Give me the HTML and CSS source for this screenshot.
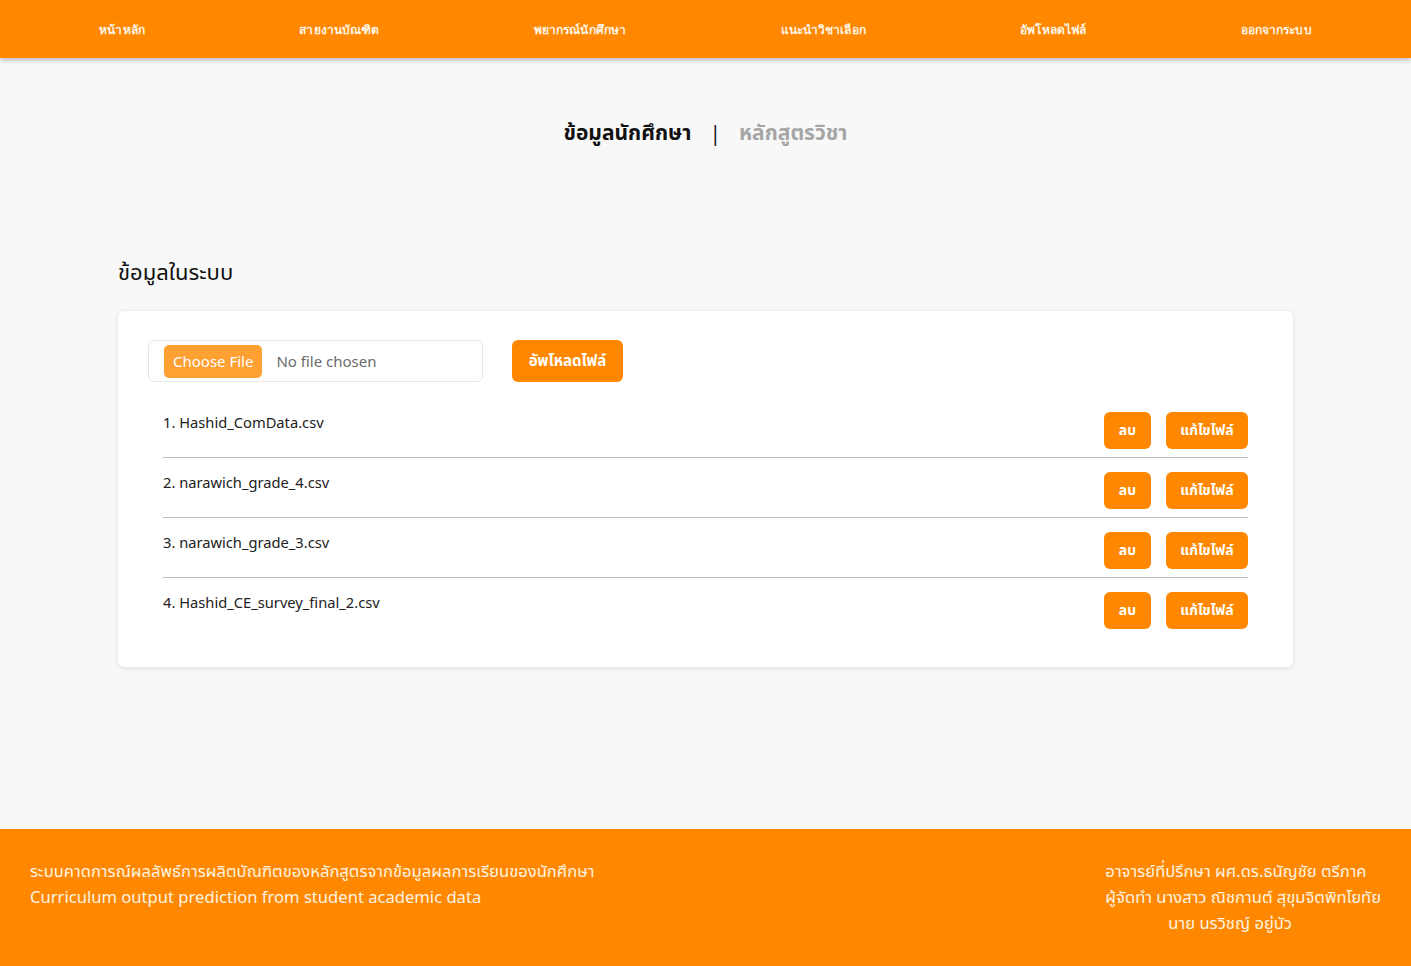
FILE: index.html
```html
<!DOCTYPE html>
<html lang="th">
<head>
<meta charset="utf-8">
<link rel="stylesheet" href="styles.css">
</head>
<body>
<nav class="nav">
  <a class="nav-item">หน้าหลัก</a>
  <a class="nav-item">สายงานบัณฑิต</a>
  <a class="nav-item">พยากรณ์นักศึกษา</a>
  <a class="nav-item">แนะนำวิชาเลือก</a>
  <a class="nav-item">อัพโหลดไฟล์</a>
  <a class="nav-item">ออกจากระบบ</a>
</nav>
<main class="main">
  <div class="tabs">
    <span class="tab active">ข้อมูลนักศึกษา</span>
    <span class="sep">|</span>
    <span class="tab">หลักสูตรวิชา</span>
  </div>
  <h2 class="section-title">ข้อมูลในระบบ</h2>
  <section class="card">
    <div class="upload-row">
      <div class="file-input">
        <span class="choose">Choose File</span>
        <span class="nofile">No file chosen</span>
      </div>
      <button class="btn btn-upload">อัพโหลดไฟล์</button>
    </div>
    <ul class="file-list">
      <li class="file-row"><span class="fname">1. Hashid_ComData.csv</span><span class="actions"><button class="btn btn-sm btn-del">ลบ</button><button class="btn btn-sm btn-edit">แก้ไขไฟล์</button></span></li>
      <li class="file-row"><span class="fname">2. narawich_grade_4.csv</span><span class="actions"><button class="btn btn-sm btn-del">ลบ</button><button class="btn btn-sm btn-edit">แก้ไขไฟล์</button></span></li>
      <li class="file-row"><span class="fname">3. narawich_grade_3.csv</span><span class="actions"><button class="btn btn-sm btn-del">ลบ</button><button class="btn btn-sm btn-edit">แก้ไขไฟล์</button></span></li>
      <li class="file-row last"><span class="fname">4. Hashid_CE_survey_final_2.csv</span><span class="actions"><button class="btn btn-sm btn-del">ลบ</button><button class="btn btn-sm btn-edit">แก้ไขไฟล์</button></span></li>
    </ul>
  </section>
</main>
<footer class="footer">
  <div class="foot-left">
    <p>ระบบคาดการณ์ผลลัพธ์การผลิตบัณฑิตของหลักสูตรจากข้อมูลผลการเรียนของนักศึกษา</p>
    <p>Curriculum output prediction from student academic data</p>
  </div>
  <div class="foot-right">
    <p>อาจารย์ที่ปรึกษา ผศ.ดร.ธนัญชัย ตรีภาค</p>
    <p>ผู้จัดทำ นางสาว ณิชกานต์ สุขุมจิตพิทโยทัย</p>
    <p class="indent">นาย นรวิชญ์ อยู่บัว</p>
  </div>
</footer>
</body>
</html>
```

FILE: styles.css
```css
* { box-sizing: border-box; }
html, body { margin: 0; padding: 0; }
body {
  font-family: "Noto Sans", "Noto Sans Thai", "DejaVu Sans", sans-serif;
  background: #f8f8f8;
  color: #222;
  min-height: 966px;
  display: flex;
  flex-direction: column;
}
.nav {
  height: 58px;
  background: #ff8800;
  display: flex;
  align-items: center;
  justify-content: space-around;
  padding: 0 22px;
  box-shadow: 0 2px 5px rgba(0,0,0,0.25);
  position: relative;
  z-index: 2;
}
.nav-item {
  color: #fff4e6;
  font-size: 12px;
  font-weight: bold;
  font-family: "DejaVu Sans", sans-serif;
  letter-spacing: 0.1px;
}
.main {
  flex: 1;
  padding: 0 118px;
}
.tabs {
  display: flex;
  justify-content: center;
  align-items: center;
  gap: 18px;
  margin-top: 58px;
  font-size: 21px;
  font-weight: bold;
  height: 34px;
}
.tab { color: #a6a6a6; }
.tab.active { color: #111; }
.sep { color: #222; font-weight: normal; }
.section-title {
  margin: 105px 0 0;
  font-size: 22px;
  font-weight: normal;
  color: #111;
  height: 32px;
  line-height: 32px;
}
.card {
  margin-top: 24px;
  background: #fff;
  border-radius: 6px;
  box-shadow: 0 1px 5px rgba(0,0,0,0.12);
  padding: 29px 45px 38px 30px;
}
.upload-row {
  display: flex;
  align-items: center;
  gap: 29px;
}
.file-input {
  width: 335px;
  height: 42px;
  border: 1px solid #e6e6e6;
  border-radius: 6px;
  display: flex;
  align-items: center;
  padding-left: 15px;
  gap: 14px;
}
.choose {
  background: #ffa033;
  color: #fff;
  font-size: 15px;
  border-radius: 5px;
  height: 33px;
  line-height: 33px;
  padding: 0 9px;
}
.nofile { color: #6b6b6b; font-size: 15px; }
.btn {
  border: none;
  background: #ff8800;
  color: #fff;
  font-family: "Noto Sans", "Noto Sans Thai", sans-serif;
  font-weight: bold;
  border-radius: 6px;
  cursor: pointer;
  padding: 0;
}
.btn-upload {
  width: 111px;
  height: 42px;
  font-size: 15px;
}
.file-list {
  list-style: none;
  margin: 16px 0 0 15px;
  padding: 0;
}
.file-row {
  display: flex;
  justify-content: space-between;
  align-items: flex-start;
  height: 60px;
  border-bottom: 1px solid #bfbfbf;
  padding-top: 14px;
}
.file-row.last { border-bottom: none; height: 51px; }
.fname {
  font-size: 14.7px;
  color: #222;
  line-height: 20px;
}
.actions { display: flex; gap: 15px; }
.btn-sm {
  height: 37px;
  font-size: 14px;
}
.btn-del { width: 47px; }
.btn-edit { width: 82px; }
.footer {
  background: #ff8800;
  height: 137px;
  display: flex;
  justify-content: space-between;
  padding: 29px 30px 0 30px;
  color: #fff3e0;
  font-size: 16.6px;
}
.footer p { margin: 0; line-height: 26px; }
.indent { padding-left: 63px; }
```
